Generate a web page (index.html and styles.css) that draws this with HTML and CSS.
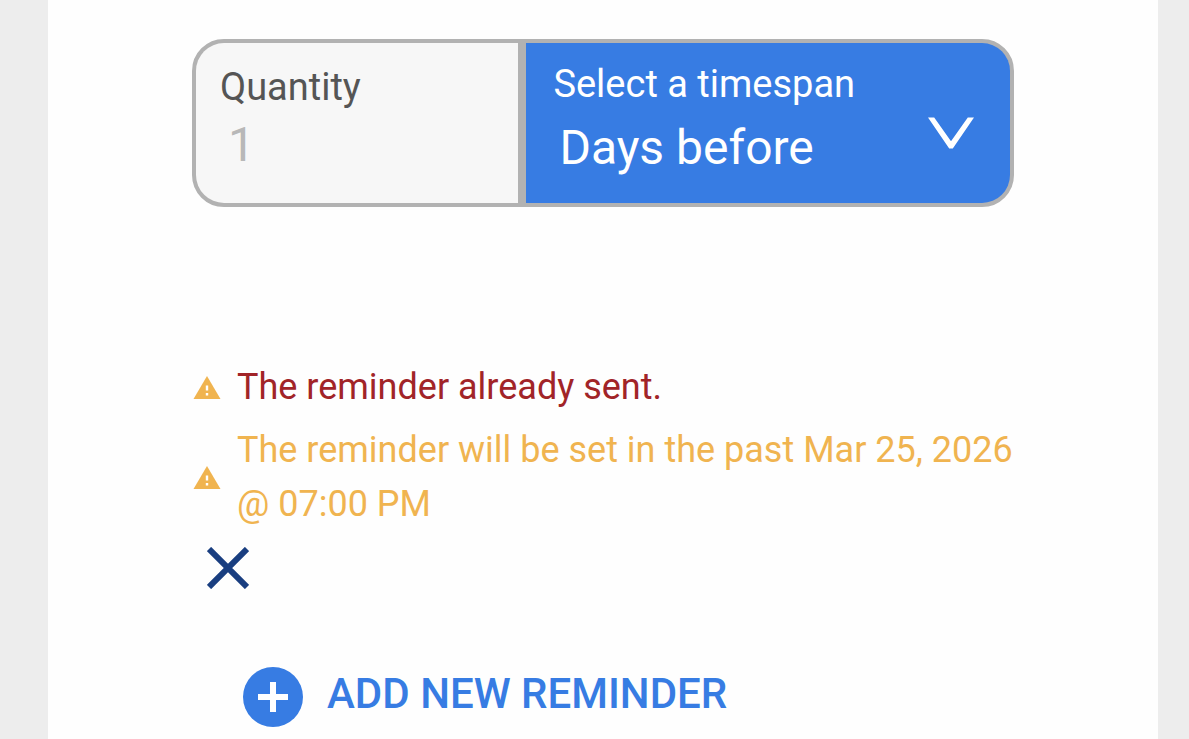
FILE: index.html
```html
<!DOCTYPE html>
<html lang="en">
<head>
    <meta charset="UTF-8" />
    <meta name="viewport" content="width=device-width, initial-scale=1.0" />
    <title>Reminders</title>
    <link rel="stylesheet" href="styles.css">
</head>
<body>
    <main class="panel">
        <form class="reminder">
            <div class="reminder-fields">
                <div class="field quantity">
                    <label for="quantity">Quantity</label>
                    <input type="text" id="quantity" inputmode="numeric" placeholder="1" />
                </div>
                <div class="field timespan">
                    <label for="timespan">Select a timespan</label>
                    <div class="select-row">
                        <select id="timespan">
                            <option>Days before</option>
                        </select>
                        <svg class="chevron" viewBox="0 0 46 32" aria-hidden="true">
                            <path d="M0 0.500h6.200L23 24.200 39.800 0.500H46L24.800 31.500h-3.600z" />
                        </svg>
                    </div>
                </div>
            </div>

            <div class="messages">
                <div class="message message-error">
                    <svg class="warning" viewBox="0 0 28 24" aria-hidden="true">
                        <path d="M14 1l13.500 23H.5z" />
                        <path class="mark" d="M12.800 10.500h2.400v5h-2.400zM12.800 18h2.400v2.500h-2.400z" />
                    </svg>
                    <p>The reminder already sent.</p>
                </div>
                <div class="message message-warning">
                    <svg class="warning" viewBox="0 0 28 24" aria-hidden="true">
                        <path d="M14 1l13.500 23H.5z" />
                        <path class="mark" d="M12.800 10.500h2.400v5h-2.400zM12.800 18h2.400v2.500h-2.400z" />
                    </svg>
                    <p>The reminder will be set in the past Mar 25, 2026 @ 07:00 PM</p>
                </div>
            </div>

            <button type="button" class="remove" aria-label="Remove reminder">
                <svg viewBox="0 0 42 42" aria-hidden="true">
                    <path d="M2 2l38 38M40 2L2 40" />
                </svg>
            </button>
        </form>

        <button type="button" class="add">
            <svg viewBox="0 0 60 60" aria-hidden="true">
                <circle cx="30" cy="30" r="30" />
                <path d="M15 30h30M30 15v30" />
            </svg>
            <span>ADD NEW REMINDER</span>
        </button>
    </main>
</body>
</html>
```
FILE: styles.css
```css
:root {
    --blue: #377ce3;
    --navy: #193e80;
    --border: #b2b2b2;
    --error: #a12428;
    --warning: #f0b450;
}
* {
    box-sizing: border-box;
}
body {
    margin: 0;
    background: #ededed;
    font-family: Roboto, sans-serif;
}
.panel {
    min-height: 100vh;
    margin: 0 31px 0 48px;
    padding: 39px 144px 12px;
    background: #fefefe;
}
.reminder-fields {
    display: grid;
    grid-template-columns: 2fr 3fr;
    gap: 8px;
    background: var(--border);
    border: 4px solid var(--border);
    border-radius: 32px;
    overflow: hidden;
}
.field {
    display: flex;
    flex-direction: column;
    min-width: 0;
    min-height: 160px;
    padding: 20px 24px;
}
.field label {
    font-size: 38px;
    line-height: 44px;
}
.field input,
.field select {
    width: 100%;
    min-width: 0;
    height: 56px;
    padding: 0;
    border: none;
    outline: none;
    background: transparent;
    color: inherit;
    font-family: inherit;
    font-size: 48px;
    line-height: 56px;
    appearance: none;
}
.quantity {
    gap: 8px;
    padding-top: 22px;
    background: #f7f7f7;
    color: #555;
}
.quantity input {
    padding-left: 8px;
}
.quantity input::placeholder {
    color: #b8b8b8;
    opacity: 1;
}
.timespan {
    gap: 10px;
    padding: 19px 24px 19px 27px;
    background: var(--blue);
    color: #fff;
}
.timespan select {
    height: 64px;
}
.select-row {
    display: flex;
    padding: 0 12px 0 6px;
}
.chevron {
    flex: none;
    width: 46px;
    height: 32px;
    margin-top: 1px;
    fill: #fff;
    pointer-events: none;
}
.messages {
    display: flex;
    flex-direction: column;
    gap: 9px;
    margin-top: 153px;
}
.message {
    display: flex;
    align-items: center;
    gap: 16px;
    font-size: 36px;
    line-height: 54px;
}
.message p {
    margin: 0;
}
.message-error {
    color: var(--error);
}
.message-warning {
    color: var(--warning);
}
.warning {
    flex: none;
    width: 28px;
    height: 24px;
    margin-left: 1px;
    fill: var(--warning);
}
.warning .mark {
    fill: #fff;
}
button {
    border: none;
    background: transparent;
    font-family: inherit;
    cursor: pointer;
}
.remove {
    display: block;
    margin-top: 16px;
    padding: 0 15px;
}
.remove svg {
    display: block;
    width: 42px;
    height: 42px;
    stroke: var(--navy);
    stroke-width: 6;
}
.add {
    display: flex;
    align-items: center;
    gap: 24px;
    margin: 78px 0 0 51px;
    padding: 0;
    color: var(--blue);
    font-size: 42px;
    font-weight: 500;
    line-height: 48px;
}
.add svg {
    flex: none;
    width: 60px;
    height: 60px;
    fill: var(--blue);
}
.add path {
    stroke: #fff;
    stroke-width: 6;
}
.add span {
    padding-bottom: 6px;
}
```
